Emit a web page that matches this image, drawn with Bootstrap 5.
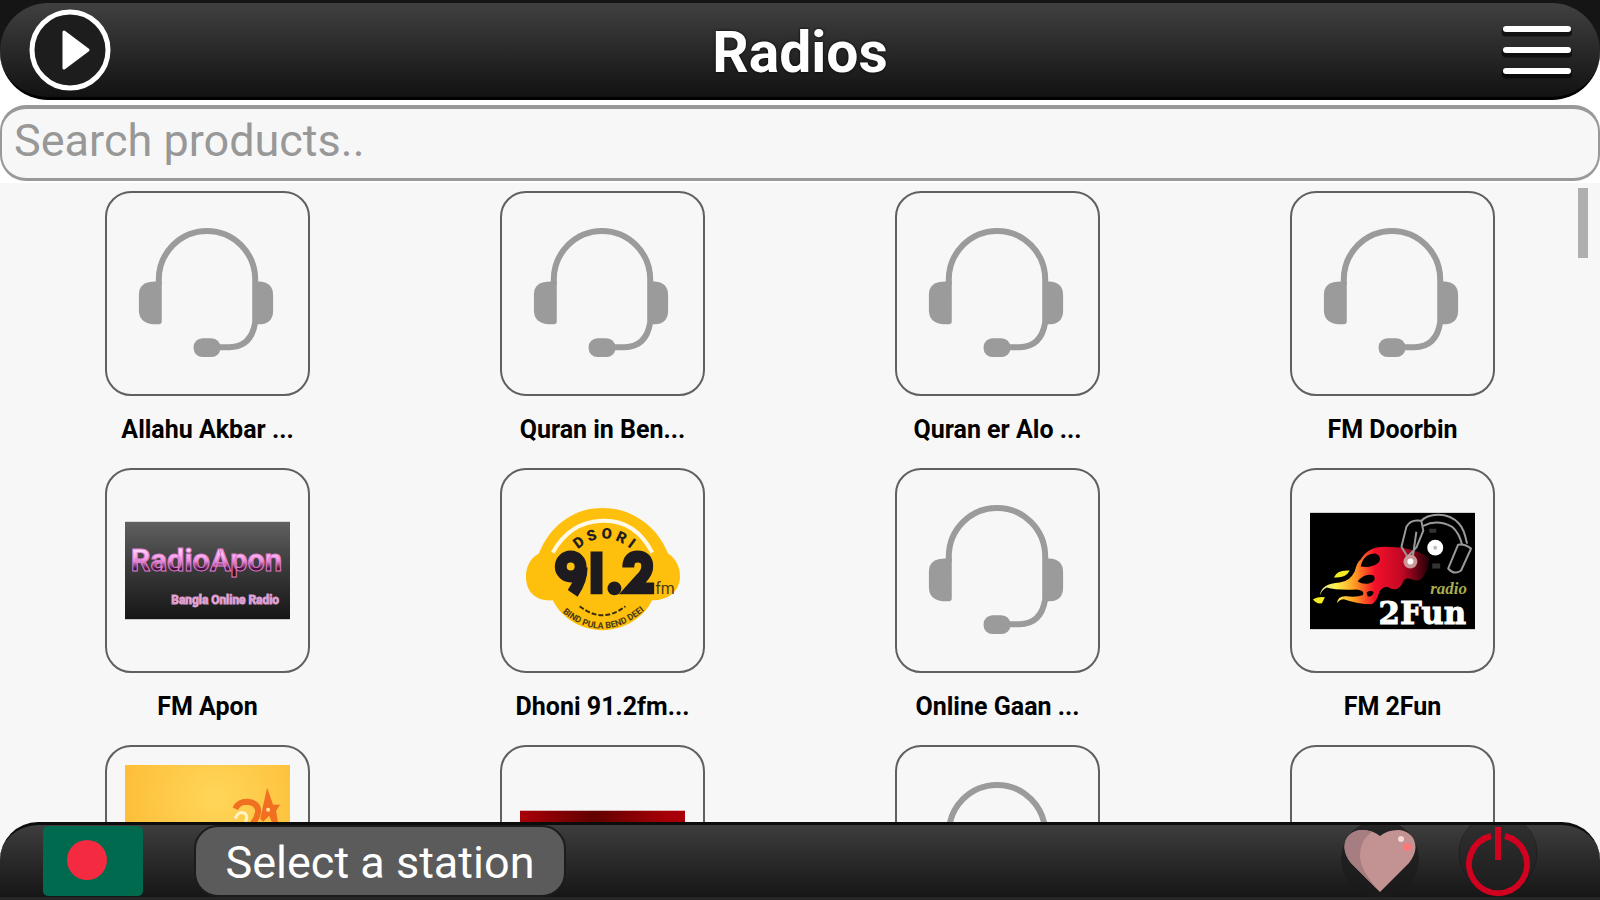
<!DOCTYPE html>
<html lang="en">
<head>
<meta charset="utf-8">
<meta name="viewport" content="width=device-width, initial-scale=1">
<title>Radios</title>
<link href="https://cdn.jsdelivr.net/npm/bootstrap@5.3.0/dist/css/bootstrap.min.css" rel="stylesheet">
<style>
body{font-family:Roboto,"Liberation Sans",sans-serif;background:#f7f7f7}
.bar-wrap{background:linear-gradient(#151515 50px,#fff 50px);padding-top:3px}
.top-bar{height:97px;border-radius:48px;background:linear-gradient(#404040,#121212);border-bottom:3px solid #000;padding:0 28px}
.top-bar h1{font-size:57px;line-height:64px;padding-top:6px;color:#fff;text-shadow:0 0 3px #000}
.search-wrap{background:#fff;padding:5px 0 2px}
.search-box{height:76px;border:solid #999;border-width:4px 2px 3px;border-radius:26px;background:#f7f7f7;font-size:45px;line-height:54px;padding:0 12px 6px}
.search-box::placeholder{color:#989898;opacity:1}
.search-box:focus{background:#f7f7f7;box-shadow:none}
.stations{padding:8px 10px 0;min-height:0}
.station{height:277px;color:#000}
.tile{width:205px;height:205px;border:2px solid #606060;border-radius:26px}
.tile svg{width:165px;height:165px}
.station-name{font-size:25px;line-height:28px;font-weight:700;margin-top:20px}
.thumb{right:12px;top:5px;width:10px;height:70px;background:#afafaf}
.bottom-bar{height:78px;border-radius:38px 38px 0 0;background:linear-gradient(#3d3d3d,#161616);border-top:3px solid #0c0c0c;border-bottom:3px solid #262626;padding:0 60px 0 43px}
.flag{width:100px;height:70px}
.pick{width:372px;height:72px;border:2px solid #1c1c1c;border-radius:24px;background:#5b5b5b;color:#fff;font-size:45px;line-height:52px;margin-left:51px}
.quick{gap:34px}
.plain{background:none;border:0;padding:0;line-height:0}
</style>
</head>
<body class="vh-100 overflow-hidden d-flex flex-column">
<svg class="d-none" aria-hidden="true">
  <symbol id="headset" viewBox="0 0 166 166">
    <g fill="#9b9b9b">
      <path d="M31 71h6v40q0 3-3 3h-6q-14-2-14-14V84q0-13 17-13z"/>
      <path d="M129 71h7q13 1 13 14v15q0 13-13 14h-7V71z"/>
      <rect x="69" y="128" width="27" height="19" rx="9"/>
    </g>
    <path d="M34 74v-5a48.500 49 0 0 1 97 0v43q-4 25-26 25H92" fill="none" stroke="#9b9b9b" stroke-width="6"/>
  </symbol>
</svg>

<header class="bar-wrap flex-shrink-0">
  <div class="top-bar d-flex align-items-center justify-content-between">
    <button class="plain" aria-label="Play"><svg width="84" height="84"><circle cx="42" cy="42" r="38" fill="#1d1d1d" stroke="#fff" stroke-width="5"/><path d="M36 24l24 18-24 18z" fill="#fff" stroke="#fff" stroke-width="3" stroke-linejoin="round"/></svg></button>
    <h1 class="m-0 fw-bold">Radios</h1>
    <button class="plain" aria-label="Menu"><svg width="84" height="60"><path d="M18 12h62M18 33h62M18 54h62" stroke="#000" stroke-width="9" stroke-linecap="round" opacity=".6"/><path d="M18 9h62M18 30h62M18 51h62" stroke="#fff" stroke-width="6" stroke-linecap="round"/></svg></button>
  </div>
</header>
<div class="search-wrap flex-shrink-0">
  <input class="form-control search-box" type="search" placeholder="Search products.." aria-label="Search products">
</div>

<main class="stations flex-grow-1 overflow-hidden position-relative">
  <div class="row row-cols-4 g-0">
    <a href="#" class="station text-decoration-none d-flex flex-column align-items-center">
      <div class="tile d-flex align-items-center justify-content-center"><svg><use href="#headset"/></svg></div>
      <div class="station-name">Allahu Akbar ...</div>
    </a>
    <a href="#" class="station text-decoration-none d-flex flex-column align-items-center">
      <div class="tile d-flex align-items-center justify-content-center"><svg><use href="#headset"/></svg></div>
      <div class="station-name">Quran in Ben...</div>
    </a>
    <a href="#" class="station text-decoration-none d-flex flex-column align-items-center">
      <div class="tile d-flex align-items-center justify-content-center"><svg><use href="#headset"/></svg></div>
      <div class="station-name">Quran er Alo ...</div>
    </a>
    <a href="#" class="station text-decoration-none d-flex flex-column align-items-center">
      <div class="tile d-flex align-items-center justify-content-center"><svg><use href="#headset"/></svg></div>
      <div class="station-name">FM Doorbin</div>
    </a>
    <a href="#" class="station text-decoration-none d-flex flex-column align-items-center">
      <div class="tile d-flex align-items-center justify-content-center">
        <svg viewBox="0 0 166 166">
          <defs>
            <linearGradient id="slate" x2="0" y2="1"><stop stop-color="#606060"/><stop offset=".5" stop-color="#383838"/><stop offset="1" stop-color="#161616"/></linearGradient>
            <linearGradient id="pink" x2="0" y2="1"><stop offset=".2" stop-color="#ffd6fa"/><stop offset=".5" stop-color="#f08fe0"/><stop offset=".7" stop-color="#4a123f"/><stop offset="1" stop-color="#000"/></linearGradient>
          </defs>
          <rect y="34" width="166" height="98" fill="url(#slate)"/>
          <text x="82" y="84" text-anchor="middle" font-family="Roboto,sans-serif" font-weight="700" font-size="31" fill="url(#pink)" stroke="#e07fd0" stroke-width="1">RadioApon</text>
          <text x="155" y="117" text-anchor="end" font-family="Roboto,sans-serif" font-weight="700" font-size="12" fill="#f3b8e6" stroke="#d79aca" stroke-width="1">Bangla Online Radio</text>
        </svg>
      </div>
      <div class="station-name">FM Apon</div>
    </a>
    <a href="#" class="station text-decoration-none d-flex flex-column align-items-center">
      <div class="tile d-flex align-items-center justify-content-center">
        <svg viewBox="0 0 166 166">
          <defs>
            <path id="arc-top" d="M48 72Q83 30 122 71"/>
            <path id="arc-low" d="M38 121Q83 163 130 119"/>
          </defs>
          <path fill="#ffc00d" d="M19 66C30 38 54 20 83 20s55 18 66 46c8 5 12 14 12 23 0 14-11 24-28 24-9 18-28 30-50 30s-41-12-50-30C15 114 6 104 6 89c0-10 5-19 13-23z"/>
          <path d="M33 65Q50 34 83 33t50 32" fill="none" stroke="#fff9e8" stroke-width="4"/>
          <text font-family="Roboto,sans-serif" font-weight="900" font-size="15" fill="#231f20"><textPath href="#arc-top" startOffset="50%" text-anchor="middle">D S O R I</textPath></text>
          <g fill="none" stroke="#1d1a20" stroke-width="12">
            <circle cx="51" cy="79" r="10"/>
            <path d="M62 80q0 13-9 26M77 64v43"/>
            <path d="M109 80v-2q1-9 9-9 10 0 10 10 0 6-6 12l-9 10h22"/>
          </g>
          <circle cx="95" cy="101" r="7" fill="#1d1a20"/>
          <text x="136" y="107" font-family="Roboto,sans-serif" font-size="16" fill="#4b3a12">fm</text>
          <path d="M60 119q23 18 46 0" fill="none" stroke="#3a2c10" stroke-width="2" stroke-dasharray="5 2"/>
          <text font-family="Roboto,sans-serif" font-weight="700" font-size="9" fill="#4b3a12"><textPath href="#arc-low" startOffset="50%" text-anchor="middle">BIND PULA BEND DEEI</textPath></text>
        </svg>
      </div>
      <div class="station-name">Dhoni 91.2fm...</div>
    </a>
    <a href="#" class="station text-decoration-none d-flex flex-column align-items-center">
      <div class="tile d-flex align-items-center justify-content-center"><svg><use href="#headset"/></svg></div>
      <div class="station-name">Online Gaan ...</div>
    </a>
    <a href="#" class="station text-decoration-none d-flex flex-column align-items-center">
      <div class="tile d-flex align-items-center justify-content-center">
        <svg viewBox="0 0 166 166">
          <defs><linearGradient id="fire"><stop stop-color="#e8e8a0"/><stop offset=".15" stop-color="#fff04a"/><stop offset=".32" stop-color="#ff9a20"/><stop offset=".5" stop-color="#f5102a"/><stop offset=".75" stop-color="#c00824"/><stop offset="1" stop-color="#200008"/></linearGradient></defs>
          <rect y="25" width="166" height="117" fill="#000"/>
          <path fill="url(#fire)" d="M10 108q1-12 20-13 10-1 15-11 2-9 6-12 7-13 24-13 15 0 27 3 12 3 18 9 0 8-4 15-5 10-13 6-8-3-10 4-4 8-12 5-6-4-11 3-3 11-8 13-14 0-28-5-4 0-7 4 1-8 10-7 10 1 16-1 3-5-6-6-20 1-30-2-5 2-7 8z"/>
          <path fill="#000" d="M51 79q3-13 15-13 7 3 3 9-7 6-18 4zM48 94q7-9 16-6 4 6-5 8-6 1-11-2zM57 105q5-3 7 0-1 5-6 4z"/>
          <path d="M24 90q3-8 16-7-4 8-16 7zM3 112q6-3 12-2l-3 6q-6 1-9-4z" fill="#f4ec22"/>
          <g fill="none" stroke="#999" stroke-width="2" stroke-linejoin="round">
            <path d="M92 59l5-20q4-8 15-6l2 10-7 17-9 9zM111 34q6-7 18-7 13 0 21 9 5 5 8 20M114 38q14-7 29 1 7 6 10 18M107 44l-4 28"/>
            <path d="M149 57q7-1 13 4l-10 22q-7 5-13-2z"/>
          </g>
          <path d="M120 41h7v4h-7zM123 76h8v5h-8z" fill="#333"/>
          <circle cx="126" cy="60" r="8" fill="#fff"/><circle cx="126" cy="60" r="2" fill="#bbb"/>
          <circle cx="101" cy="74" r="7" fill="#c99"/><circle cx="101" cy="74" r="3" fill="#fff"/>
          <text x="121" y="107" font-family="'Liberation Serif',serif" font-style="italic" font-weight="700" font-size="17" fill="#a9ae4e">radio</text>
          <text x="69" y="137" font-family="'DejaVu Serif','Liberation Serif',serif" font-weight="700" font-size="31" fill="#fff" stroke="#fff" stroke-width="1">2Fun</text>
        </svg>
      </div>
      <div class="station-name">FM 2Fun</div>
    </a>
    <a href="#" class="station text-decoration-none d-flex flex-column align-items-center" aria-label="Station 24">
      <div class="tile d-flex align-items-center justify-content-center">
        <svg viewBox="0 0 166 166">
          <defs><radialGradient id="gold" cx=".55" cy=".2" r=".7"><stop stop-color="#ffd65a"/><stop offset="1" stop-color="#fdb930"/></radialGradient></defs>
          <rect width="166" height="166" fill="url(#gold)"/>
          <path d="M111 44q3-7 12-7 11 1 11 10-1 8-9 16" fill="none" stroke="#f07020" stroke-width="6"/>
          <path d="M111 54q3-9 10-5 3 3 0 8" fill="none" stroke="#fff3c8" stroke-width="3"/>
          <path d="M136 54l7-31 6 17 7 0-4 6 2 12-6 0-3-7-6 6z" fill="#f07020"/><circle cx="144" cy="45" r="2" fill="#ffe0a0"/>
          <path d="M99 63q4-5 10-1z" fill="#4a9a3a"/>
        </svg>
      </div>
    </a>
    <a href="#" class="station text-decoration-none d-flex flex-column align-items-center" aria-label="Station">
      <div class="tile d-flex align-items-center justify-content-center">
        <svg viewBox="0 0 166 166">
          <defs><linearGradient id="ruby"><stop stop-color="#a80008"/><stop offset=".45" stop-color="#620000"/><stop offset=".9" stop-color="#a80008"/></linearGradient></defs>
          <rect y="46" width="166" height="76" fill="url(#ruby)"/>
        </svg>
      </div>
    </a>
    <a href="#" class="station text-decoration-none d-flex flex-column align-items-center" aria-label="Station">
      <div class="tile d-flex align-items-center justify-content-center"><svg><use href="#headset"/></svg></div>
    </a>
    <a href="#" class="station text-decoration-none d-flex flex-column align-items-center" aria-label="Station">
      <div class="tile"></div>
    </a>
  </div>
  <div class="thumb position-absolute"></div>
</main>

<footer class="bottom-bar flex-shrink-0 d-flex align-items-center">
  <button class="plain" aria-label="Country: Bangladesh"><svg class="flag" viewBox="0 0 100 70"><rect width="100" height="70" rx="5" fill="#006a4e"/><circle cx="44" cy="34" r="20" fill="#f42a41"/></svg></button>
  <button class="pick px-0 pt-1 pb-0">Select a station</button>
  <div class="quick ms-auto d-flex">
    <button class="plain" aria-label="Favourite"><svg width="84" height="72" viewBox="0 0 84 72">
      <circle cx="42" cy="34" r="39" fill="#1b1b1b" opacity=".7"/>
      <path d="M42 67L13 38C-1 20 10 5 24 5q11 0 18 6 7-6 18-6c14 0 25 15 11 33z" fill="#c39393"/>
      <path d="M42 67L13 38C-1 20 10 5 24 5q6 0 10 2-12 8-12 24 0 14 20 36z" fill="#a67d80"/>
      <circle cx="69" cy="22" r="4" fill="#ff7777"/><circle cx="63" cy="14" r="3" fill="#f5d5d5"/>
    </svg></button>
    <button class="plain" aria-label="Power"><svg width="84" height="72" viewBox="0 0 84 72">
      <circle cx="42" cy="28" r="39" fill="#222" opacity=".5" stroke="#151515"/>
      <path d="M35 11a29 29 0 1 0 14 0" fill="none" stroke="#d0021f" stroke-width="6"/><path d="M42 2v33" stroke="#d0021f" stroke-width="6"/>
    </svg></button>
  </div>
</footer>
<script src="https://cdn.jsdelivr.net/npm/bootstrap@5.3.0/dist/js/bootstrap.bundle.min.js"></script>
</body>
</html>
